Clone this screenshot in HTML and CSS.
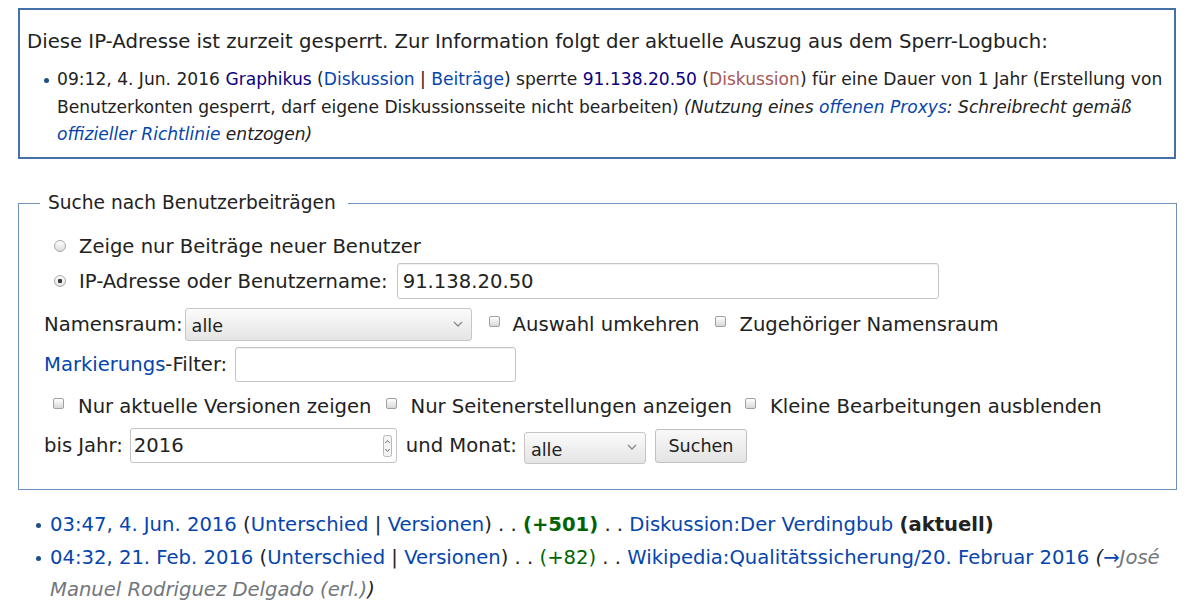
FILE: index.html
```html
<!DOCTYPE html>
<html lang="de">
<head>
<meta charset="utf-8">
<title>Benutzerbeiträge</title>
<link rel="stylesheet" href="styles.css">
</head>
<body>
<div class="page">
  <div class="notice">
    <p class="intro">Diese IP-Adresse ist zurzeit gesperrt. Zur Information folgt der aktuelle Auszug aus dem Sperr-Logbuch:</p>
    <ul class="log">
      <li>09:12, 4. Jun. 2016 <a class="visited">Graphikus</a> (<a>Diskussion</a> | <a>Beiträge</a>) sperrte <a class="visited">91.138.20.50</a> (<a class="new">Diskussion</a>) für eine Dauer von 1 Jahr (Erstellung von Benutzerkonten gesperrt, darf eigene Diskussionsseite nicht bearbeiten) <i>(Nutzung eines <a>offenen Proxys</a>: Schreibrecht gemäß <a>offizieller Richtlinie</a> entzogen)</i></li>
    </ul>
  </div>

  <fieldset class="search">
    <legend>Suche nach Benutzerbeiträgen</legend>
    <div class="row r1">
      <input type="radio" class="radio" name="t">
      <span>Zeige nur Beiträge neuer Benutzer</span>
    </div>
    <div class="row r2">
      <input type="radio" class="radio" name="t" checked>
      <span>IP-Adresse oder Benutzername:</span>
      <input type="text" class="field ip" value="91.138.20.50">
    </div>
    <div class="row r3">
      <span>Namensraum:</span>
      <div class="select ns"><span>alle</span><svg class="chev" width="10" height="6" viewBox="0 0 10 6"><path d="M1 1 L5 5 L9 1" fill="none" stroke="#8a8a8a" stroke-width="1.3"/></svg></div>
      <input type="checkbox" class="check c-inv">
      <span>Auswahl umkehren</span>
      <input type="checkbox" class="check c-assoc">
      <span>Zugehöriger Namensraum</span>
    </div>
    <div class="row r4">
      <span><a>Markierungs</a>-Filter:</span>
      <input type="text" class="field tag" value="">
    </div>
    <div class="row r5">
      <input type="checkbox" class="check c1">
      <span>Nur aktuelle Versionen zeigen</span>
      <input type="checkbox" class="check c2">
      <span>Nur Seitenerstellungen anzeigen</span>
      <input type="checkbox" class="check c3">
      <span>Kleine Bearbeitungen ausblenden</span>
    </div>
    <div class="row r6">
      <span>bis Jahr:</span>
      <div class="numbox">
        <input type="text" class="numinput" value="2016">
        <span class="spin"><svg width="9" height="22" viewBox="0 0 9 22"><rect x="0.5" y="0.5" width="8" height="21" rx="2" fill="#f4f4f4" stroke="#b8b8b8"/><path d="M2.3 8 L4.5 5.5 L6.7 8" fill="none" stroke="#707070" stroke-width="1"/><path d="M2.3 14 L4.5 16.5 L6.7 14" fill="none" stroke="#707070" stroke-width="1"/></svg></span>
      </div>
      <span class="monat">und Monat:</span>
      <div class="select month"><span>alle</span><svg class="chev" width="10" height="6" viewBox="0 0 10 6"><path d="M1 1 L5 5 L9 1" fill="none" stroke="#8a8a8a" stroke-width="1.3"/></svg></div>
      <button type="button" class="btn">Suchen</button>
    </div>
  </fieldset>

  <ul class="results">
    <li><a>03:47, 4. Jun. 2016</a> (<a>Unterschied</a> | <a>Versionen</a>) . . <strong class="plus">(+501)</strong> . . <a>Diskussion:Der Verdingbub</a> <b>(aktuell)</b></li>
    <li><a>04:32, 21. Feb. 2016</a> (<a>Unterschied</a> | <a>Versionen</a>) . . <span class="plus">(+82)</span> . . <a>Wikipedia:Qualitätssicherung/20. Februar 2016</a> <span class="comment">(<span class="auto"><a>→</a>José Manuel Rodriguez Delgado (erl.)</span>)</span></li>
  </ul>
</div>
</body>
</html>
```

FILE: styles.css
```css
html, body {
  margin: 0;
  padding: 0;
  background: #ffffff;
}

body {
  font-family: "DejaVu Sans", "Liberation Sans", sans-serif;
  color: #222222;
  font-size: 19.6px;
}

a {
  color: #0645ad;
  text-decoration: none;
}

a.visited {
  color: #0b0080;
}

a.new {
  color: #a55858;
}

.page {
  padding: 8px 0 0 18px;
  width: 1159px;
}

/* Block notice */
.notice {
  box-sizing: border-box;
  width: 1158px;
  height: 151px;
  border: 2px solid #4570a8;
  padding: 18px 0 0 7px;
}

.intro {
  margin: 0;
  font-size: 19.7px;
  line-height: 28px;
}

.log {
  list-style: none;
  margin: 10px 0 0 0;
  padding: 0 0 0 30px;
}

.log li {
  position: relative;
  font-size: 17.1px;
  line-height: 27.5px;
}

.log li::before,
.results li::before {
  content: "";
  position: absolute;
  width: 5px;
  height: 5px;
  border-radius: 50%;
  background: #1f4f86;
}

.log li::before {
  left: -13px;
  top: 12px;
}

.log i {
  color: #222222;
}

/* Search form */
.search {
  box-sizing: border-box;
  width: 1159px;
  margin: 33px 0 0 0;
  padding: 18px 0 26px 25px;
  border: 1px solid #6f92bd;
  min-inline-size: 0;
}

.search legend {
  padding: 0 12px 0 8px;
  margin-left: -4px;
  font-size: 18.6px;
  line-height: 22px;
  color: #222222;
}

.row {
  display: flex;
  align-items: center;
  white-space: nowrap;
}

.r1 { height: 28px; padding-left: 10px; }
.r2 { height: 36px; padding-left: 10px; margin-top: 3px; }
.r3 { height: 34px; margin-top: 8px; }
.r4 { height: 35px; margin-top: 6px; }
.r5 { height: 28px; margin-top: 10px; padding-left: 9px; }
.r6 { height: 35px; margin-top: 8px; }

.radio {
  appearance: none;
  -webkit-appearance: none;
  box-sizing: border-box;
  width: 12px;
  height: 12px;
  margin: 0 13px 0 0;
  border-radius: 50%;
  border: 1px solid #a8a8a8;
  background: linear-gradient(#ffffff, #dcdcdc);
  flex: none;
}

.radio:checked {
  background: radial-gradient(circle, #3a3a3a 0 2px, transparent 2.5px), linear-gradient(#ffffff, #e2e2e2);
}

.check {
  appearance: none;
  -webkit-appearance: none;
  box-sizing: border-box;
  width: 11px;
  height: 11px;
  margin: 0 14px 0 0;
  border-radius: 2px;
  border: 1px solid #a0a0a0;
  background: linear-gradient(#ffffff, #d8d8d8);
  flex: none;
  position: relative;
  top: -3px;
}

.c-inv { margin-left: 17px; margin-right: 13px; }
.c-assoc { margin-left: 15px; }
.c2 { margin-left: 14px; }
.c3 { margin-left: 13px; }

.field {
  box-sizing: border-box;
  height: 36px;
  border: 1px solid #c4c4c4;
  border-radius: 3px;
  padding: 0 5px;
  font-family: "DejaVu Sans", "Liberation Sans", sans-serif;
  font-size: 19.6px;
  color: #222222;
  background: #ffffff;
  box-shadow: inset 0 1px 1px rgba(0,0,0,0.06);
  outline: none;
}

.ip {
  width: 542px;
  margin-left: 9px;
}

.tag {
  width: 281px;
  height: 35px;
  margin-left: 8px;
}

.select {
  box-sizing: border-box;
  display: flex;
  align-items: center;
  justify-content: space-between;
  height: 33px;
  border: 1px solid #c6c6c6;
  border-radius: 3px;
  background: linear-gradient(#fbfbfb, #e4e4e4);
  padding: 4px 8px 0 6px;
  font-size: 17.6px;
  color: #222222;
}

.select .chev {
  margin-top: -5px;
}

.ns {
  width: 287px;
  margin-left: 2px;
}

.numbox {
  box-sizing: border-box;
  display: flex;
  align-items: center;
  width: 267px;
  height: 35px;
  margin-left: 7px;
  border: 1px solid #c4c4c4;
  border-radius: 3px;
  background: #ffffff;
  padding: 0 4px 0 0;
}

.numinput {
  flex: 1;
  min-width: 0;
  border: none;
  outline: none;
  background: transparent;
  padding: 0 3px;
  font-family: "DejaVu Sans", "Liberation Sans", sans-serif;
  font-size: 19.6px;
  color: #222222;
}

.spin {
  display: flex;
}

.monat {
  margin-left: 9px;
}

.month {
  width: 122px;
  height: 32px;
  margin-left: 7px;
  margin-top: 4px;
}

.btn {
  box-sizing: border-box;
  width: 92px;
  height: 34px;
  margin-left: 9px;
  border: 1px solid #c0c0c0;
  border-radius: 3px;
  background: linear-gradient(#f9f9f9, #e3e3e3);
  font-family: "DejaVu Sans", "Liberation Sans", sans-serif;
  font-size: 17.6px;
  color: #222222;
  padding: 0;
}

/* Results */
.results {
  list-style: none;
  margin: 19px 0 0 0;
  padding: 0 0 0 32px;
}

.results li {
  position: relative;
  font-size: 19.6px;
  line-height: 32.5px;
}

.results li::before {
  left: -14px;
  top: 14px;
}

.plus {
  color: #006400;
}

.results b {
  color: #222222;
}

.comment {
  font-style: italic;
  color: #222222;
}

.auto {
  color: #72777d;
}
```
